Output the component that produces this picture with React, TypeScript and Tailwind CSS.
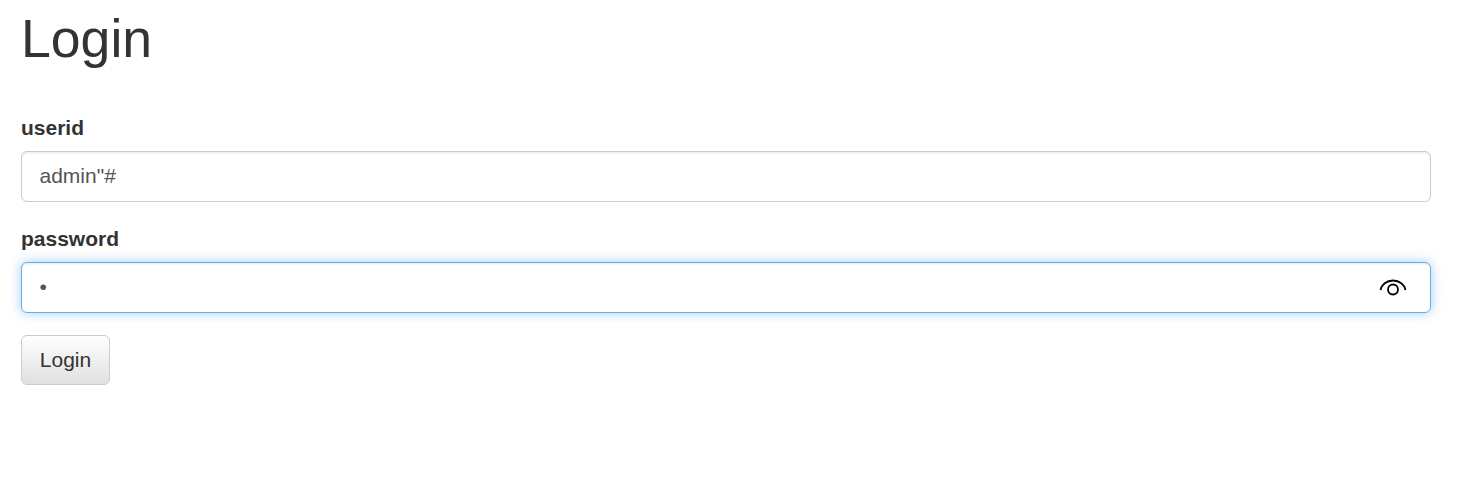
import React from 'react';

const EyeIcon = () => (
  <svg width="28" height="18" viewBox="0 0 28 18" fill="none" stroke="#000" strokeWidth="1.8">
    <path d="M1.5 12C2.5 6.5 7.5 2.5 14 2.5S25.5 6.5 26.5 12" />
    <circle cx="14" cy="11.5" r="5" />
  </svg>
);

const App = () => {
  return (
    <div className="min-h-screen bg-white px-[21px] pt-[9px] font-['Liberation_Sans',Arial,sans-serif] text-[#333]">
      <h1 className="mb-[45px] text-[53.6px] leading-[59.4px] font-normal">Login</h1>
      <form className="w-[1410px]">
        <div className="mb-[22.5px]">
          <label className="mb-[7.5px] block text-[21px] leading-[30px] font-bold">userid</label>
          <input
            readOnly
            type="text"
            value={'admin"#'}
            className="block h-[51px] w-full rounded-[6px] border-[1.5px] border-[#ccc] bg-white px-[17.5px] text-[21px] text-[#555] shadow-[inset_0_1.5px_1.5px_rgba(0,0,0,0.075)] outline-none"
          />
        </div>
        <div className="mb-[22.5px]">
          <label className="mb-[7.5px] block text-[21px] leading-[30px] font-bold">password</label>
          <div className="relative">
            <input
              readOnly
              type="password"
              value="a"
              className="block h-[51px] w-full rounded-[6px] border-[1.5px] border-[#66afe9] bg-white px-[17.5px] text-[21px] text-[#555] shadow-[inset_0_1.5px_1.5px_rgba(0,0,0,0.075),0_0_12px_rgba(102,175,233,0.6)] outline-none"
            />
            <span className="absolute top-[16px] right-[24px]">
              <EyeIcon />
            </span>
          </div>
        </div>
        <button
          type="button"
          className="h-[50px] w-[89px] rounded-[6px] border-[1.5px] border-[#ccc] bg-gradient-to-b from-white to-[#e0e0e0] pb-[2px] text-[21px] text-[#333]"
        >
          Login
        </button>
      </form>
    </div>
  );
};

export default App;
